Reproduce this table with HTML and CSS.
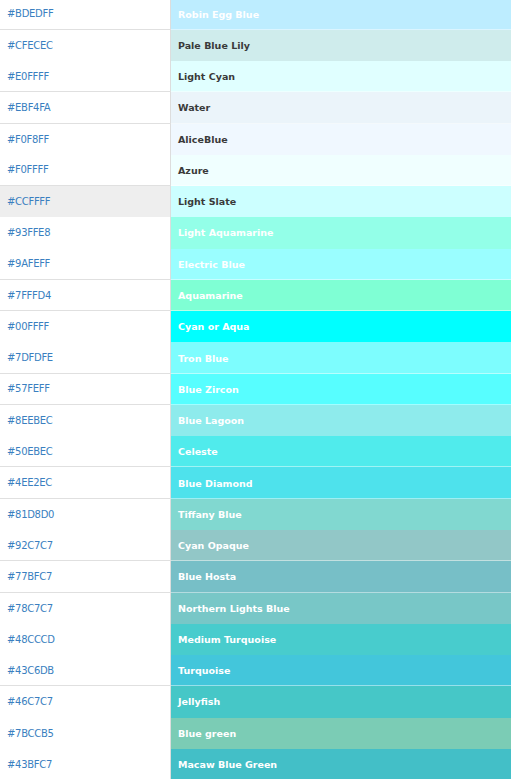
FILE: index.html
```html
<!DOCTYPE html>
<html>
<head>
<meta charset="utf-8">
<link rel="stylesheet" href="styles.css">
</head>
<body>
<div class="list">
  <div class="row sep"><div class="code">#BDEDFF</div><div class="swatch light" style="background:#BDEDFF">Robin Egg Blue</div></div>
  <div class="row"><div class="code">#CFECEC</div><div class="swatch dark" style="background:#CFECEC">Pale Blue Lily</div></div>
  <div class="row sep"><div class="code">#E0FFFF</div><div class="swatch dark" style="background:#E0FFFF">Light Cyan</div></div>
  <div class="row sep"><div class="code">#EBF4FA</div><div class="swatch dark" style="background:#EBF4FA">Water</div></div>
  <div class="row"><div class="code">#F0F8FF</div><div class="swatch dark" style="background:#F0F8FF">AliceBlue</div></div>
  <div class="row sep"><div class="code">#F0FFFF</div><div class="swatch dark" style="background:#F0FFFF">Azure</div></div>
  <div class="row hover"><div class="code">#CCFFFF</div><div class="swatch dark" style="background:#CCFFFF">Light Slate</div></div>
  <div class="row"><div class="code">#93FFE8</div><div class="swatch light" style="background:#93FFE8">Light Aquamarine</div></div>
  <div class="row sep"><div class="code">#9AFEFF</div><div class="swatch light" style="background:#9AFEFF">Electric Blue</div></div>
  <div class="row sep"><div class="code">#7FFFD4</div><div class="swatch light" style="background:#7FFFD4">Aquamarine</div></div>
  <div class="row"><div class="code">#00FFFF</div><div class="swatch light" style="background:#00FFFF">Cyan or Aqua</div></div>
  <div class="row sep"><div class="code">#7DFDFE</div><div class="swatch light" style="background:#7DFDFE">Tron Blue</div></div>
  <div class="row sep"><div class="code">#57FEFF</div><div class="swatch light" style="background:#57FEFF">Blue Zircon</div></div>
  <div class="row"><div class="code">#8EEBEC</div><div class="swatch light" style="background:#8EEBEC">Blue Lagoon</div></div>
  <div class="row sep"><div class="code">#50EBEC</div><div class="swatch light" style="background:#50EBEC">Celeste</div></div>
  <div class="row sep"><div class="code">#4EE2EC</div><div class="swatch light" style="background:#4EE2EC">Blue Diamond</div></div>
  <div class="row"><div class="code">#81D8D0</div><div class="swatch light" style="background:#81D8D0">Tiffany Blue</div></div>
  <div class="row sep"><div class="code">#92C7C7</div><div class="swatch light" style="background:#92C7C7">Cyan Opaque</div></div>
  <div class="row sep"><div class="code">#77BFC7</div><div class="swatch light" style="background:#77BFC7">Blue Hosta</div></div>
  <div class="row"><div class="code">#78C7C7</div><div class="swatch light" style="background:#78C7C7">Northern Lights Blue</div></div>
  <div class="row"><div class="code">#48CCCD</div><div class="swatch light" style="background:#48CCCD">Medium Turquoise</div></div>
  <div class="row sep"><div class="code">#43C6DB</div><div class="swatch light" style="background:#43C6DB">Turquoise</div></div>
  <div class="row"><div class="code">#46C7C7</div><div class="swatch light" style="background:#46C7C7">Jellyfish</div></div>
  <div class="row"><div class="code">#7BCCB5</div><div class="swatch light" style="background:#7BCCB5">Blue green</div></div>
  <div class="row"><div class="code">#43BFC7</div><div class="swatch light" style="background:#43BFC7">Macaw Blue Green</div></div>
</div>
</body>
</html>
```
FILE: styles.css
```css
html, body {
  margin: 0;
  padding: 0;
  background: #ffffff;
}
body {
  font-family: "DejaVu Sans", Verdana, sans-serif;
  overflow: hidden;
}
.list {
  margin-top: -1.5px;
  display: flex;
  flex-direction: column;
}
.row {
  display: flex;
  height: 31.28px;
  box-sizing: border-box;
}
.code {
  width: 171px;
  flex: none;
  box-sizing: border-box;
  border-right: 1px solid #dddddd;
  padding-left: 7px;
  display: flex;
  align-items: center;
  font-size: 10px;
  letter-spacing: -0.3px;
  color: #3a7fc0;
}
.swatch {
  flex: 1;
  display: flex;
  align-items: center;
  padding-left: 7px;
  font-size: 9.5px;
  font-weight: bold;
}
.swatch.light {
  color: #ffffff;
}
.swatch.dark {
  color: #3a3a3a;
}
.row.sep .code {
  border-bottom: 1px solid #e0e0e0;
}
.row.sep .swatch {
  box-shadow: inset 0 -1px 0 rgba(255, 255, 255, 0.45);
}
.row.hover .code {
  background: #eeeeee;
}
```
